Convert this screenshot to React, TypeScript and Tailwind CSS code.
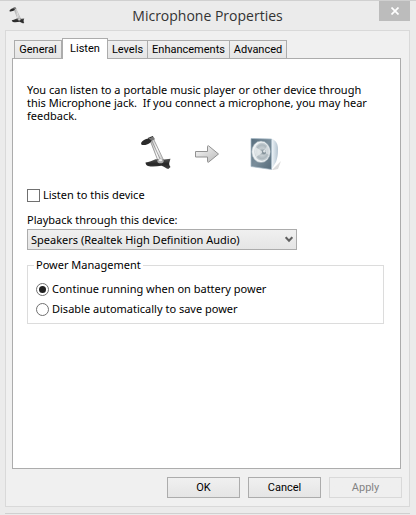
import { useState } from 'react';
import clsx from 'clsx';

const TABS = [
  { name: 'General', width: 'w-12' },
  { name: 'Listen', width: 'w-[46px]' },
  { name: 'Levels', width: 'w-[41px]' },
  { name: 'Enhancements', width: 'w-[83px]' },
  { name: 'Advanced', width: 'w-[58px]' },
];

const POWER_OPTIONS = [
  { id: 'continue', label: 'Continue running when on battery power' },
  { id: 'disable', label: 'Disable automatically to save power' },
];

function MicrophoneIcon({ className }: { className?: string }) {
  return (
    <svg viewBox="0 0 36 36" className={className} aria-hidden="true">
      <defs>
        <linearGradient id="mic-base" x1="0" y1="0" x2="0" y2="1">
          <stop offset="0" stopColor="#555" />
          <stop offset="0.5" stopColor="#262626" />
          <stop offset="1" stopColor="#444" />
        </linearGradient>
        <linearGradient id="mic-arm" x1="0" y1="0" x2="1" y2="0">
          <stop offset="0" stopColor="#bbb" />
          <stop offset="0.5" stopColor="#fafafa" />
          <stop offset="1" stopColor="#bdbdbd" />
        </linearGradient>
      </defs>
      <path d="M10.500 5.500 18 26l5.500-1L14 4Z" fill="url(#mic-arm)" />
      <path d="M10.500 5.500 18.500 26M14 4l9.500 20M12 5 21 25" stroke="#8c8c8c" strokeWidth="0.800" fill="none" />
      <path d="M6 4 13.500.8 15 3.200 9 6.500Z" fill="#777" />
      <path d="M1 7C2.500 4.500 5 3 8.500 2.500l3 2c0 1.500-1.700 2.800-4 3.700-2.200.9-4.500 1.100-6 .6Z" fill="#2b2b2b" />
      <path d="m8 2.500 5-2" stroke="#333" strokeWidth="1.200" />
      <path d="M5.500 26.500c3.500-.3 7-2 10-3.300l8.500.3 6.500-.7-1 3.200c-.7 1.800-.3 3.500 1 5l-2.200 2c-2-.6-4.300-2.300-6.800-3.300-4.500.6-9 1.300-13.500.3-1.500-.6-2.300-1.800-2.500-3.500Z" fill="url(#mic-base)" />
      <ellipse cx="20.500" cy="25" rx="3.200" ry="2.300" fill="#a8a8a8" />
      <ellipse cx="20.500" cy="24.200" rx="1.700" ry="1.100" fill="#eee" />
    </svg>
  );
}

function ArrowIcon() {
  return (
    <svg viewBox="0 0 26 20" className="h-5 w-[26px]" aria-hidden="true">
      <defs>
        <linearGradient id="arrow-fill" x1="0" y1="0" x2="1" y2="1">
          <stop offset="0" stopColor="#fafafa" />
          <stop offset="1" stopColor="#b9b9b9" />
        </linearGradient>
      </defs>
      <path d="M1.500 7.500h12v-5c0-1 .8-1 1.400-.4L24.500 10l-9.600 7.900c-.6.6-1.400.6-1.400-.4v-4.500h-12Z" fill="url(#arrow-fill)" stroke="#929292" strokeLinejoin="round" />
    </svg>
  );
}

function SpeakerIcon() {
  return (
    <svg viewBox="0 0 32 34" className="h-[34px] w-8" aria-hidden="true">
      <defs>
        <linearGradient id="speaker-front" x1="0" y1="0" x2="1" y2="1">
          <stop offset="0" stopColor="#566c7c" />
          <stop offset="0.500" stopColor="#7a8e9b" />
          <stop offset="1" stopColor="#566b7a" />
        </linearGradient>
        <linearGradient id="speaker-side" x1="0" y1="0" x2="1" y2="0">
          <stop offset="0" stopColor="#f0f6fa" />
          <stop offset="0.600" stopColor="#cbd7e0" />
          <stop offset="1" stopColor="#b4c3cf" />
        </linearGradient>
        <radialGradient id="speaker-cone">
          <stop offset="0" stopColor="#8a979e" />
          <stop offset="0.400" stopColor="#c6ced2" />
          <stop offset="0.750" stopColor="#adb8be" />
          <stop offset="1" stopColor="#d0d8dc" />
        </radialGradient>
      </defs>
      <path d="m22 33 9-9-3 8-5 1Z" fill="#dcdcdc" />
      <path d="M21.500 1.500 24 3c3.500 2.500 4 6 4 10s-.5 8-2 12l-4.500 7.500Z" fill="url(#speaker-side)" />
      <path d="m1 1.500 20.500.5v30.500L1 29.500Z" fill="url(#speaker-front)" stroke="#a9bbc8" strokeWidth="0.700" />
      <ellipse cx="11" cy="14.800" rx="9.300" ry="10.800" fill="#eef2f4" stroke="#9aa9b2" strokeWidth="0.600" />
      <ellipse cx="12" cy="14.800" rx="7.700" ry="9.200" fill="url(#speaker-cone)" />
      <path d="m13 15-7.500-5c-1 3-.8 7 .8 10Z" fill="#eef2f4" opacity="0.700" />
      <path d="m13.500 15 4-7c2.500 3 2.700 7 1.500 10Z" fill="#eef2f4" opacity="0.500" />
      <ellipse cx="14" cy="15" rx="2" ry="2.600" fill="#84929a" />
      <ellipse cx="14.400" cy="14.200" rx="1.200" ry="1.400" fill="#dde3e6" />
    </svg>
  );
}

function DialogButton({ children, disabled }: { children: string; disabled?: boolean }) {
  return (
    <button
      type="button"
      disabled={disabled}
      className="h-[21px] w-[73px] border border-[#acacac] bg-linear-to-b from-[#f0f0f0] to-[#e5e5e5] font-[Roboto,sans-serif] leading-4 disabled:border-[#d9d9d9] disabled:from-[#efefef] disabled:to-[#efefef] disabled:text-[#838383]"
    >
      {children}
    </button>
  );
}

export default function App() {
  const [activeTab, setActiveTab] = useState('Listen');
  const [listening, setListening] = useState(false);
  const [power, setPower] = useState('continue');

  return (
    <main className="flex min-h-screen flex-col border-t border-[#d0d0d0] bg-[#ebebeb] pr-1.5 pl-[5px] font-['Noto_Sans','Liberation_Sans',sans-serif] text-[11px] text-black">
      <header className="flex h-[29px] items-start justify-between">
        <MicrophoneIcon className="mt-1.5 ml-1 h-[18px] w-[18px]" />
        <h1 className="mt-1 ml-[9px] font-['Open_Sans','Noto_Sans',sans-serif] text-sm leading-[22px] text-[#333]">Microphone Properties</h1>
        <button type="button" aria-label="Close" className="flex h-5 w-[31px] items-center justify-center bg-[#bcbcbc]">
          <svg viewBox="0 0 8 8" className="h-2 w-2" aria-hidden="true">
            <path d="m.5.5 7 7m0-7-7 7" stroke="#fff" strokeWidth="1.700" />
          </svg>
        </button>
      </header>

      <div className="flex flex-1 flex-col border border-[#d9d9d9] bg-[#f0f0f0] pt-[7px] pr-2 pb-2 pl-1.5">
        <div role="tablist" className="flex items-end pl-0.5 font-[Roboto,sans-serif]">
          {TABS.map(tab => (
            <button
              key={tab.name}
              type="button"
              role="tab"
              aria-selected={activeTab === tab.name}
              onClick={() => setActiveTab(tab.name)}
              className={clsx(
                'border border-b-0 border-[#acacac] leading-4 whitespace-nowrap',
                tab.width,
                activeTab === tab.name
                  ? 'z-10 -mb-px h-[21px] bg-white'
                  : '-ml-px h-[18px] bg-linear-to-b from-[#f0f0f0] to-[#e5e5e5] pt-px first:ml-0',
              )}
            >
              {tab.name}
            </button>
          ))}
        </div>

        <section role="tabpanel" aria-label={activeTab} className="flex-1 border border-[#acacac] bg-white pt-6 pr-4 pb-4 pl-3.5">
          <p className="max-w-[350px] leading-[13px] whitespace-pre-wrap">
            You can listen to a portable music player or other device through this Microphone jack.{'  '}If you connect a microphone, you may hear feedback.
          </p>

          <div className="mt-3.5 flex items-center pl-[113px]">
            <MicrophoneIcon className="h-9 w-9" />
            <div className="mr-[30px] ml-[18px]">
              <ArrowIcon />
            </div>
            <SpeakerIcon />
          </div>

          <label className="mt-[15px] flex items-center gap-[3px] leading-4">
            <input
              type="checkbox"
              checked={listening}
              onChange={e => setListening(e.target.checked)}
              className="size-[13px] appearance-none border border-[#707070] bg-white p-0.5 before:block before:size-full checked:before:bg-[#212121]"
            />
            Listen to this device
          </label>

          <label htmlFor="playback-device" className="mt-[9px] block leading-4">Playback through this device:</label>
          <div className="mt-px grid w-[270px] max-w-full items-center">
            <select
              id="playback-device"
              className="col-start-1 row-start-1 h-[21px] appearance-none border border-[#acacac] bg-linear-to-b from-[#f0f0f0] to-[#e5e5e5] pr-5 pl-[3px] leading-4"
            >
              <option>Speakers (Realtek High Definition Audio)</option>
            </select>
            <svg viewBox="0 0 8 7" className="pointer-events-none col-start-1 row-start-1 mr-1 h-[7px] w-2 justify-self-end" aria-hidden="true">
              <path d="m.7 1.200 3.300 3.500 3.300-3.500" fill="none" stroke="#606060" strokeWidth="2" />
            </svg>
          </div>

          <fieldset className="mt-[7px] border border-[#dcdcdc] px-2 pt-1.5 pb-1">
            <legend className="-ml-0.5 px-0.5 leading-4">Power Management</legend>
            {POWER_OPTIONS.map(option => (
              <label key={option.id} className="flex h-5 items-center gap-[3px] leading-4">
                <input
                  type="radio"
                  name="power"
                  checked={power === option.id}
                  onChange={() => setPower(option.id)}
                  className="size-[13px] appearance-none rounded-full border border-[#707070] bg-white p-0.5 before:block before:size-full before:rounded-full checked:before:bg-[#212121]"
                />
                {option.label}
              </label>
            ))}
          </fieldset>
        </section>

        <footer className="-mr-px mt-2 flex justify-end gap-2">
          <DialogButton>OK</DialogButton>
          <DialogButton>Cancel</DialogButton>
          <DialogButton disabled>Apply</DialogButton>
        </footer>
      </div>

      <div className="h-[7px] border-b border-[#d0d0d0]" />
      <div className="h-px" />
    </main>
  );
}
